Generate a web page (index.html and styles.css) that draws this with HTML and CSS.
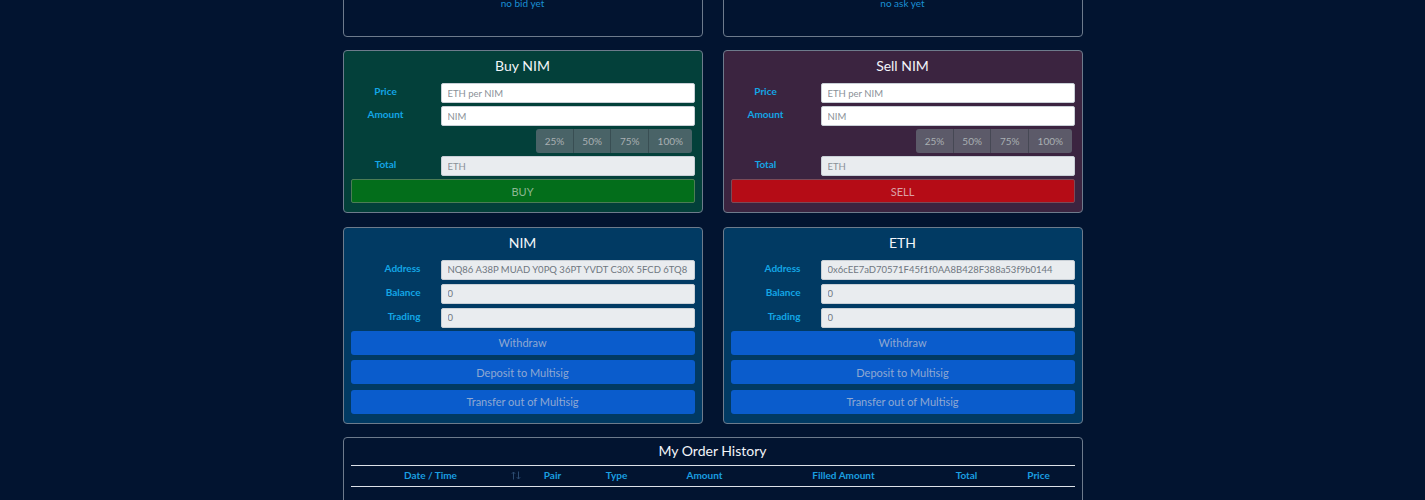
FILE: index.html
```html
<!DOCTYPE html>
<html lang="en">
<head>
<meta charset="utf-8">
<title>Exchange</title>
<link rel="stylesheet" href="styles.css">
</head>
<body>
<main class="page">
  <div class="row">
    <section class="card book"><p class="empty">no bid yet</p></section>
    <section class="card book"><p class="empty">no ask yet</p></section>
  </div>

  <div class="row">
    <section class="card trade buy">
      <h2 class="card-title">Buy NIM</h2>
      <div class="form">
        <label class="lbl">Price</label><input class="field" placeholder="ETH per NIM">
        <label class="lbl">Amount</label><input class="field" placeholder="NIM">
        <div class="pct-row">
          <div class="pct"><button>25%</button><button>50%</button><button>75%</button><button>100%</button></div>
        </div>
        <label class="lbl">Total</label><input class="field" disabled placeholder="ETH">
      </div>
      <button class="action buy-btn">BUY</button>
    </section>
    <section class="card trade sell">
      <h2 class="card-title">Sell NIM</h2>
      <div class="form">
        <label class="lbl">Price</label><input class="field" placeholder="ETH per NIM">
        <label class="lbl">Amount</label><input class="field" placeholder="NIM">
        <div class="pct-row">
          <div class="pct"><button>25%</button><button>50%</button><button>75%</button><button>100%</button></div>
        </div>
        <label class="lbl">Total</label><input class="field" disabled placeholder="ETH">
      </div>
      <button class="action sell-btn">SELL</button>
    </section>
  </div>

  <div class="row">
    <section class="card wallet">
      <h2 class="card-title">NIM</h2>
      <div class="form wform">
        <label class="lbl">Address</label><input class="field" disabled value="NQ86 A38P MUAD Y0PQ 36PT YVDT C30X 5FCD 6TQ8">
        <label class="lbl">Balance</label><input class="field" disabled value="0">
        <label class="lbl">Trading</label><input class="field" disabled value="0">
      </div>
      <div class="wbtns">
        <button class="wbtn">Withdraw</button>
        <button class="wbtn">Deposit to Multisig</button>
        <button class="wbtn">Transfer out of Multisig</button>
      </div>
    </section>
    <section class="card wallet">
      <h2 class="card-title">ETH</h2>
      <div class="form wform">
        <label class="lbl">Address</label><input class="field" disabled value="0x6cEE7aD70571F45f1f0AA8B428F388a53f9b0144">
        <label class="lbl">Balance</label><input class="field" disabled value="0">
        <label class="lbl">Trading</label><input class="field" disabled value="0">
      </div>
      <div class="wbtns">
        <button class="wbtn">Withdraw</button>
        <button class="wbtn">Deposit to Multisig</button>
        <button class="wbtn">Transfer out of Multisig</button>
      </div>
    </section>
  </div>

  <section class="card history">
    <h2 class="card-title history-title">My Order History</h2>
    <table class="orders">
      <thead>
        <tr>
          <th class="c-date">Date / Time<svg class="sort" width="10" height="9" viewBox="0 0 10 9"><path d="M2.5 8.5V1M0.8 2.8L2.5 1L4.2 2.8M7.5 0.5V8M5.8 6.2L7.5 8L9.2 6.2" stroke="#2a4a70" fill="none" stroke-width="1"/></svg></th>
          <th class="c-pair">Pair</th>
          <th class="c-type">Type</th>
          <th class="c-amount">Amount</th>
          <th class="c-filled">Filled Amount</th>
          <th class="c-total">Total</th>
          <th class="c-price">Price</th>
        </tr>
      </thead>
      <tbody>
        <tr><td colspan="7" class="empty-row"></td></tr>
      </tbody>
    </table>
  </section>
</main>
</body>
</html>
```

FILE: styles.css
```css
* { box-sizing: border-box; }

html, body {
  margin: 0;
  padding: 0;
  background: #021430;
}

body {
  font-family: "Lato", "Open Sans", sans-serif;
  color: #eef2f7;
}

.page {
  width: 740px;
  margin: -25px auto 0;
}

.row {
  display: grid;
  grid-template-columns: 1fr 1fr;
  column-gap: 20px;
  margin-bottom: 13.4px;
}

.card {
  border: 1px solid #6d7b8c;
  border-radius: 4px;
  padding: 5px 7px 9px 7px;
}

.book {
  padding: 20px 7px 25px;
}

.empty {
  margin: 0;
  text-align: center;
  font-size: 10px;
  line-height: 15px;
  color: #1a90d4;
}

.buy { background: #03403a; }
.sell { background: #3b2440; }
.wallet { background: #013a63; }

.card-title {
  margin: 0 0 7px;
  text-align: center;
  font-size: 14px;
  line-height: 20px;
  font-weight: 400;
  color: #f2f5f9;
}

.form {
  display: grid;
  grid-template-columns: 70px 1fr;
  column-gap: 20px;
  row-gap: 3px;
}

.lbl {
  font-size: 10px;
  line-height: 15px;
  font-weight: 700;
  color: #13a6e6;
  text-align: center;
  padding-top: 1px;
}

.field {
  height: 20px;
  width: 100%;
  border: 1px solid #c8cfd6;
  border-radius: 2px;
  background: #ffffff;
  padding: 0 6px;
  font-family: inherit;
  font-size: 9.5px;
  color: #6c757d;
  outline: none;
}

.field::placeholder { color: #8a9198; }

.field:disabled {
  background: #e9ecef;
  color: #6f777f;
}

.pct-row {
  grid-column: 1 / -1;
  display: flex;
  justify-content: flex-end;
  padding-right: 3px;
}

.pct {
  display: flex;
  height: 24px;
  border-radius: 3px;
  overflow: hidden;
  background: rgba(108, 117, 125, 0.68);
}

.pct button {
  border: none;
  background: transparent;
  padding: 0 8.5px;
  font-family: inherit;
  font-size: 10px;
  color: #a9b0b3;
  border-left: 1px solid rgba(30, 40, 45, 0.35);
}

.pct button:first-child { border-left: none; }

.action {
  display: block;
  width: 100%;
  height: 24px;
  margin-top: 3px;
  border-radius: 2px;
  font-family: inherit;
  font-size: 11px;
}

.buy-btn {
  background: #036e1b;
  border: 1px solid #4c7d55;
  color: #8db893;
}

.sell-btn {
  background: #b50c16;
  border: 1px solid #7a4a58;
  color: #dba0a6;
}

.wform { row-gap: 4px; }

.wform .lbl {
  text-align: right;
}

.wbtns {
  display: flex;
  flex-direction: column;
  gap: 5.5px;
  margin-top: 3px;
}

.wbtn {
  height: 24px;
  width: 100%;
  border: none;
  border-radius: 3px;
  background: #0a5ccc;
  color: #8fa8d2;
  font-family: inherit;
  font-size: 11px;
}

.history {
  padding: 3px 7px 40px;
}

.history-title { margin-bottom: 4px; }

.orders {
  width: 100%;
  border-collapse: collapse;
  table-layout: fixed;
}

.orders thead tr {
  border-top: 1px solid #dce1e8;
  border-bottom: 1px solid #dce1e8;
}

.orders th {
  position: relative;
  padding: 2px 0 3px;
  font-size: 10px;
  line-height: 15px;
  font-weight: 700;
  color: #1a9fe0;
  text-align: center;
}

.c-date { width: 178px; padding-left: 8px !important; padding-right: 26px !important; }
.c-pair { width: 48px; }
.c-type { width: 80px; }
.c-amount { width: 96px; }
.c-filled { width: 182px; }
.c-total { width: 64px; }
.c-price { padding-left: 4px !important; }

.sort {
  position: absolute;
  right: 8px;
  top: 5px;
}

.empty-row { height: 20px; }
```
